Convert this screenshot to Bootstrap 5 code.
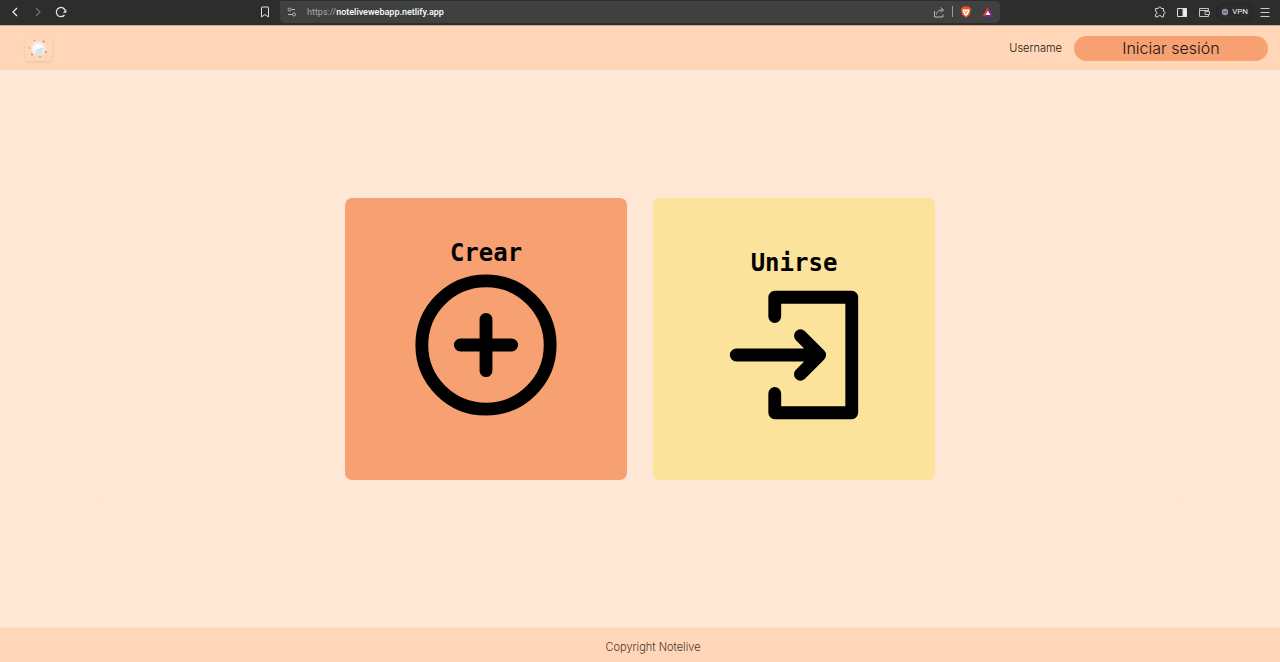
<!DOCTYPE html>
<html lang="es">
<head>
<meta charset="utf-8">
<meta name="viewport" content="width=device-width, initial-scale=1">
<title>Notelive</title>
<link href="https://cdn.jsdelivr.net/npm/bootstrap@5.3.0/dist/css/bootstrap.min.css" rel="stylesheet">
<style>
  body { font-family: Inter, "Liberation Sans", sans-serif; font-size: 11px; font-weight: 300; line-height: 16px; color: #20150f; background: #ffe7d6; }
  svg { display: block; }
  .browser-bar { height: 25px; background: #2d2d2d; color: #c8c8c8; padding: 0 8px 2px; font-family: Roboto, "Open Sans", sans-serif; font-weight: 400; }
  .tool-btn { width: 14px; height: 20px; padding: 0; border: 0; background: none; color: inherit; display: flex; align-items: center; justify-content: center; }
  .nav-tools { gap: 9px; flex: 1 1 0; }
  .extra-tools { gap: 8px; flex: 1 1 0; }
  .omnibox { width: 720px; height: 22px; background: #404040; border-radius: 0 5px 5px 5px; padding: 0 5px; gap: 8px; }
  .url-text { font-size: 9px; line-height: 14px; color: #a9a9a9; flex: 1; }
  .url-text strong { font-weight: 500; color: #fff; }
  .bar-rule { width: 1px; height: 11px; background: #999; }
  .shield-group { gap: 6px; }
  .vpn-btn { height: 18px; padding: 0 4px; gap: 3px; margin: 0 -3px; border: 1px solid #262626; border-radius: 6px; background: #2b2b2b; color: #eee; font-size: 8px; line-height: 16px; }
  .app-header { background: #ffd7b8; border-top: 1px solid #c9a68d; height: 45px; padding: 0 12px 0 25px; }
  .logo-tile { width: 27px; height: 26px; border-radius: 4px; box-shadow: 0 1px 3px #0000001c; }
  .login-btn { width: 194px; height: 25px; padding: 0; border: 0; border-radius: 13px; background: #f7a173; color: #20150f; font-size: 16px; font-weight: 300; line-height: 25px; }
  .app-main { padding: 0 8% 20px; }
  .board { min-height: 334px; border-radius: 6px; box-shadow: 0 0 2px #ffd9c466; gap: 26px; }
  .choice { width: 282px; height: 282px; border: 0; border-radius: 7px; color: #000; padding: 0; font: 700 24px/30px "DejaVu Sans Mono", monospace; }
  .choice-create { background: #f7a173; padding-bottom: 18px; }
  .choice-join { background: #fce39c; padding-top: 1px; }
  .app-footer { height: 34px; background: #ffd7b8; color: #4b362a; padding: 3px 0 0 26px; box-shadow: 0 -1px 1px #ffd7b880; }
</style>
</head>
<body class="d-flex flex-column min-vh-100">
<div class="browser-bar d-flex align-items-center">
  <div class="nav-tools d-flex align-items-center">
    <button class="tool-btn" aria-label="Atrás"><svg width="14" height="14" fill="none" stroke="#eee" stroke-width="1.2"><path d="M9 3 5 7l4 4"/></svg></button>
    <button class="tool-btn" aria-label="Adelante"><svg width="14" height="14" fill="none" stroke="#777" stroke-width="1.1"><path d="m5 3 4 4-4 4"/></svg></button>
    <button class="tool-btn" aria-label="Recargar"><svg width="14" height="14" fill="none" stroke="#e6e6e6" stroke-width="1.2"><path d="M10.500 10A4.600 4.600 0 1 1 11.500 6.500"/><path d="M12.300 4.500v3.300H8.800z" fill="#e6e6e6" stroke="none"/></svg></button>
    <button class="tool-btn ms-auto me-2" aria-label="Marcador"><svg width="14" height="14" fill="none" stroke="#ddd"><path d="M3.500 2.500q0-.5.500-.5h6q.5 0 .5.500V12L7 9.500 3.500 12z"/></svg></button>
  </div>
  <div class="omnibox d-flex align-items-center">
    <button class="tool-btn" aria-label="Información del sitio"><svg width="14" height="14" fill="none" stroke="#b5b5b5"><circle cx="4.500" cy="4.500" r="1.500"/><path d="M6.500 4.500H10M3 9.500h4"/><circle cx="9" cy="9.500" r="1.500"/></svg></button>
    <span class="url-text">https://<strong>notelivewebapp.netlify.app</strong></span>
    <div class="shield-group d-flex align-items-center">
      <button class="tool-btn" aria-label="Compartir"><svg width="14" height="14" fill="none" stroke="#b8b8b8"><path d="M2.500 6v6h8.500V9.500M4.500 9.500c.2-3 2-4.500 6.500-4.500M8.500 2.500 11.500 5 8.500 7.500"/></svg></button>
      <span class="bar-rule"></span>
      <button class="tool-btn" aria-label="Escudos"><svg width="14" height="14"><path d="M4.500 1.500h5l2.500 2-1 6L7 13 3 9.500l-1-6z" fill="#f0521e"/><path d="m4 4 2 .5h2L10 4l.5 2-1.500 3.500L7 11 5 9.500 3.500 6z" fill="#fff"/><path d="m4.800 6 1.500.6M9.200 6l-1.500.6M7 6.500V9" stroke="#f0521e" stroke-width=".8"/></svg></button>
    </div>
    <button class="tool-btn" aria-label="Recompensas"><svg width="14" height="14"><path d="M7 2 1.500 12 7 9z" fill="#f04e23"/><path d="m7 2 5.500 10L7 9z" fill="#9e1f8b"/><path d="M1.500 12h11L7 8.500z" fill="#662d91"/><path d="m7 6 2.300 4H4.700z" fill="#fff"/></svg></button>
  </div>
  <div class="extra-tools d-flex align-items-center justify-content-end">
    <button class="tool-btn" aria-label="Extensiones"><svg width="14" height="14" fill="none" stroke="#d5d5d5"><path d="M2.500 3.500h2.700a1.500 1.500 0 0 1 3 0h2.300v2.700a1.500 1.500 0 0 1 0 3v2.600H8.200a1.500 1.500 0 0 0-3 0H2.500V9.200a1.500 1.500 0 0 0 0-3z"/></svg></button>
    <button class="tool-btn" aria-label="Panel lateral"><svg width="14" height="14" fill="none" stroke="#ddd"><path d="M2.500 3.500h9v8h-9z"/><path d="M8 3.500h3.500v8H8z" fill="#eee"/></svg></button>
    <button class="tool-btn" aria-label="Cartera"><svg width="14" height="14" fill="none" stroke="#c2c2c2"><path d="M11.500 5V3.500h-9v8h9V10M2.500 5.500h9v1M8 6.500h4.500v3H8z"/></svg></button>
    <button class="vpn-btn d-flex align-items-center"><svg width="8" height="8"><circle cx="4" cy="4" r="3.200" fill="#9291a8"/><path d="M2 4h4" stroke="#555"/></svg>VPN</button>
    <button class="tool-btn" aria-label="Menú"><svg width="14" height="14" stroke="#ccc"><path d="M2.500 3.500h9M2.500 7.500h9M2.500 11.500h9"/></svg></button>
  </div>
</div>
<header class="app-header d-flex align-items-center justify-content-between">
  <a href="#" class="logo-tile d-flex align-items-center justify-content-center" aria-label="Notelive">
    <svg width="21" height="21"><circle cx="10.500" cy="10.500" r="7.500" fill="#efe7df"/><path d="M5 7q5-5 10 0l1 5-6 5q-5-1-6-5z" fill="#f9f3ec"/><path d="M9 10h7l-2 5-5 3-2-3z" fill="#d5e5e8"/><path d="M8 7h4v3H8zM7 12l5-3" fill="#fff" stroke="#fff"/><g fill="#d98170"><circle cx="6.500" cy="2.500" r=".8"/><circle cx="15.500" cy="3.500" r="1"/><circle cx="1.500" cy="10" r=".8"/><circle cx="4" cy="16.500" r="1"/><circle cx="12" cy="18.500" r=".8"/><circle cx="18" cy="14" r="1"/></g></svg>
  </a>
  <div class="d-flex align-items-center gap-2">
    <span class="me-1">Username</span>
    <button class="login-btn">Iniciar sesión</button>
  </div>
</header>
<main class="app-main flex-grow-1 d-flex flex-column justify-content-center">
  <div class="board d-flex flex-wrap align-items-center justify-content-center">
    <button class="choice choice-create d-flex flex-column align-items-center justify-content-center">
      Crear
      <svg width="154" height="154" viewBox="0 0 24 24" fill="none" stroke="#000" stroke-width="2" stroke-linecap="round"><circle cx="12" cy="12" r="10"/><path d="M12 8v8M8 12h8"/></svg>
    </button>
    <button class="choice choice-join d-flex flex-column align-items-center justify-content-center">
      Unirse
      <svg width="154" height="154" viewBox="0 0 24 24" fill="none" stroke="#000" stroke-width="2" stroke-linecap="round" stroke-linejoin="round"><path d="M9 6V3h12v18H9v-3M3 12h13M13 9l3 3-3 3"/></svg>
    </button>
  </div>
</main>
<footer class="app-footer d-flex align-items-center justify-content-center">Copyright Notelive</footer>
<script src="https://cdn.jsdelivr.net/npm/bootstrap@5.3.0/dist/js/bootstrap.bundle.min.js"></script>
</body>
</html>
